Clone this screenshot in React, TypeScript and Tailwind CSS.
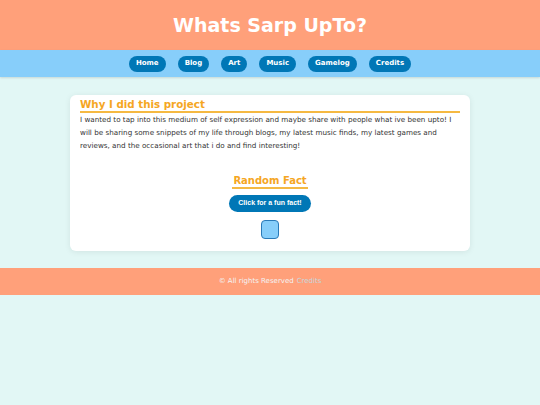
import { useState } from 'react';

const NAV_LINKS = ['Home', 'Blog', 'Art', 'Music', 'Gamelog', 'Credits'];

const verdana = { fontFamily: '"DejaVu Sans", Verdana, sans-serif' };

export default function App() {
  const [fact, setFact] = useState('');

  return (
    <div className="min-h-[405px] bg-[#e2f7f5]" style={verdana}>
      <header className="flex h-[50px] items-center justify-center bg-[#ffa07a]">
        <h1 className="text-[19px] font-bold text-white">Whats Sarp UpTo?</h1>
      </header>

      <nav className="flex h-[27px] items-center justify-center gap-[12px] bg-[#87cefa] shadow-[0_1px_2px_rgba(0,0,0,0.12)]">
        {NAV_LINKS.map((link) => (
          <a
            key={link}
            href="#"
            className="flex h-[16px] items-center rounded-full bg-[#0077b6] px-[7px] text-[7px] font-bold text-white"
          >
            {link}
          </a>
        ))}
      </nav>

      <main className="px-[70px] pt-[18px] pb-[17px]">
        <section className="rounded-[6px] bg-white px-[10px] pt-[2px] pb-[12px] shadow-[0_1px_6px_rgba(0,0,0,0.08)]">
          <h2 className="border-b-2 border-[#f5b942] text-[10.3px] leading-[14px] font-bold text-[#f5a623]">
            Why I did this project
          </h2>
          <p className="text-[7.2px] leading-[13px] text-[#333]">
            I wanted to tap into this medium of self expression and maybe share with people what ive been upto! I
            will be sharing some snippets of my life through blogs, my latest music finds, my latest games and
            reviews, and the occasional art that i do and find interesting!
          </p>

          <div className="mt-[22px] flex flex-col items-center">
            <h3 className="border-b-2 border-[#f5b942] px-[1px] text-[10px] leading-[13px] font-bold text-[#f5a623]">
              Random Fact
            </h3>
            <button
              onClick={() => setFact('Octopuses have three hearts.')}
              className="mt-[6px] h-[17px] rounded-full bg-[#0077b6] px-[9px] text-[7px] font-bold text-white"
              style={{ fontFamily: '"Liberation Sans", Arial, sans-serif' }}
            >
              Click for a fun fact!
            </button>
            <div className="mt-[8px] flex h-[19px] min-w-[18px] items-center justify-center rounded-[4px] border border-[#2a7ab8] bg-[#87cefa] text-[7px]">
              {fact}
            </div>
          </div>
        </section>
      </main>

      <footer className="flex h-[27px] items-center justify-center bg-[#ffa07a] text-[7px] text-[#f3f3f3]">
        © All rights Reserved <a href="#" className="ml-[3px] text-[#c7d7dc]">Credits</a>
      </footer>
    </div>
  );
}
